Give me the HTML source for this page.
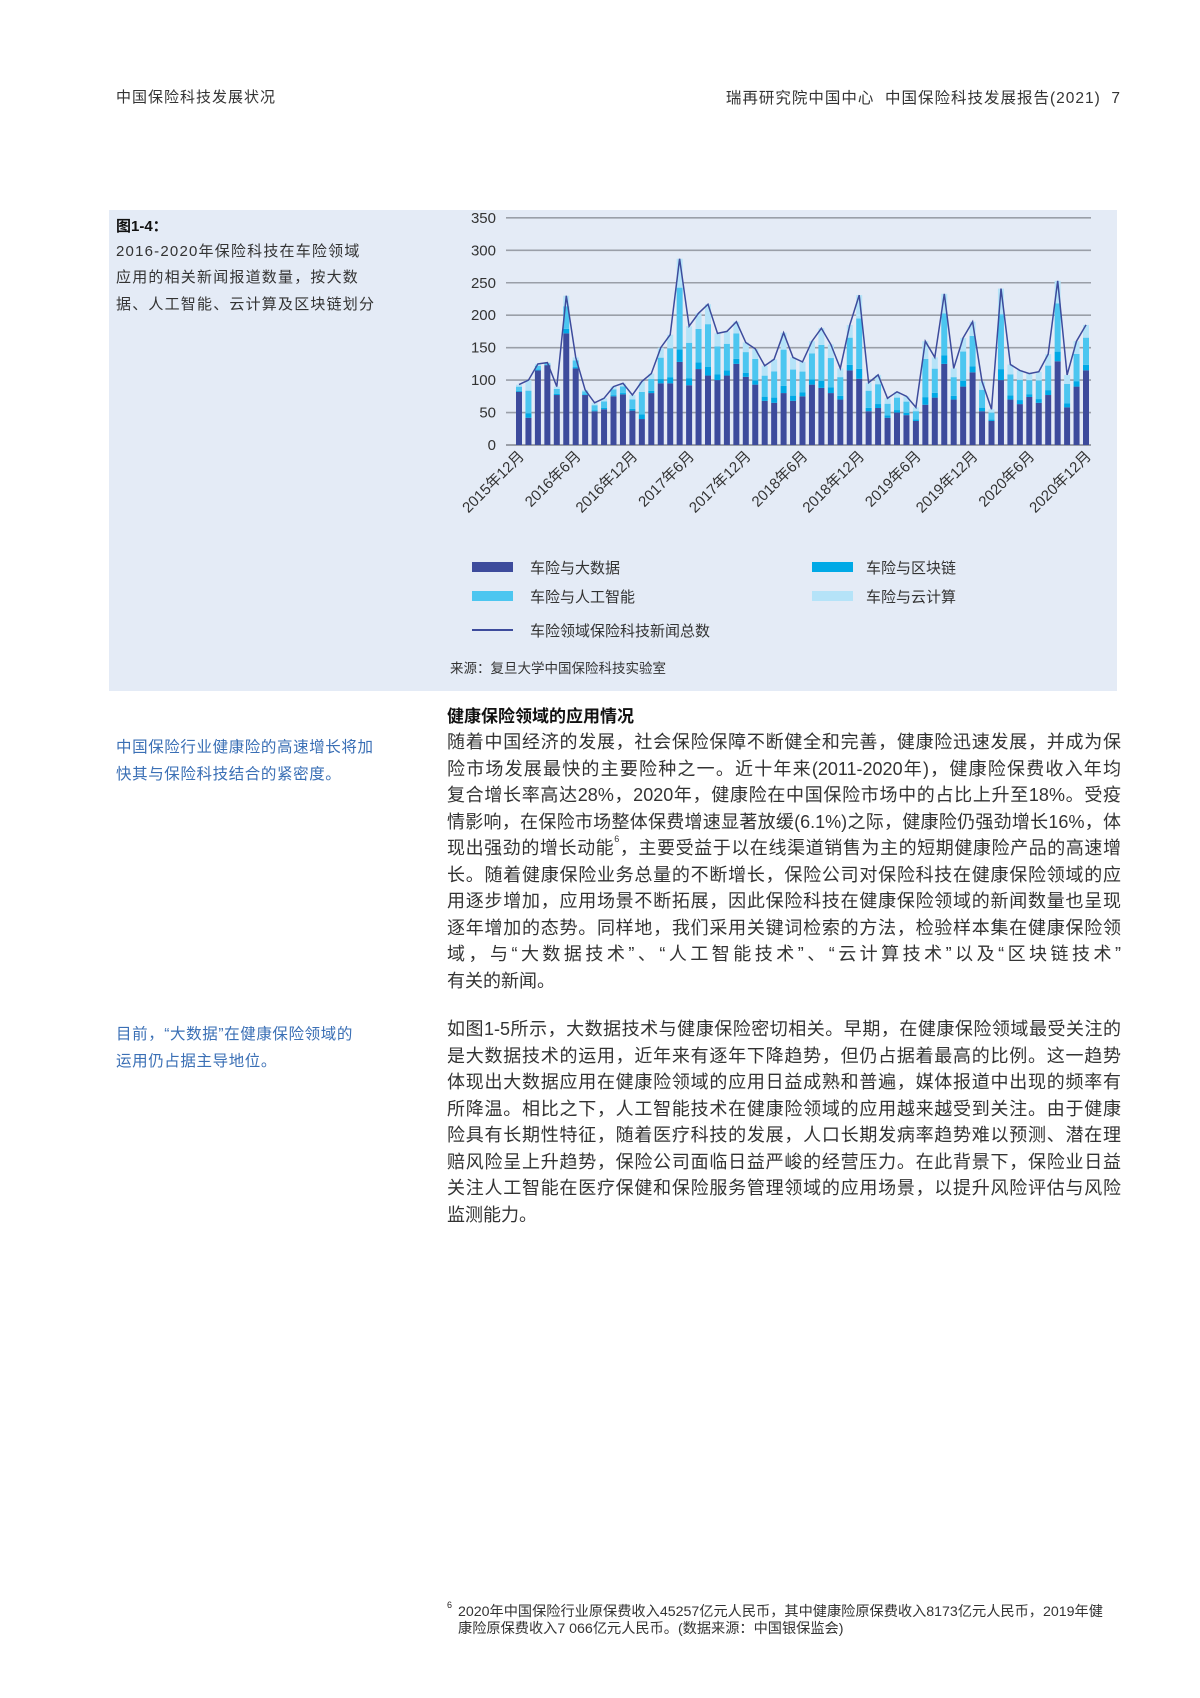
<!DOCTYPE html>
<html><head><meta charset="utf-8"><style>
body{margin:0;width:1200px;height:1698px;background:#fff;position:relative;font-family:"Liberation Sans","Noto Sans CJK SC",sans-serif;color:#231f20;overflow:hidden}
.a{position:absolute;white-space:nowrap}
.hd{font-size:15px;top:86px;color:#333;letter-spacing:1px}
#panel{position:absolute;left:109px;top:210px;width:1008px;height:481px;background:#e4ebf6}
.cap{font-size:15px;left:116px;color:#333;letter-spacing:1.2px}
.body{position:absolute;left:447px;width:674px;font-size:18px;line-height:26.5px;color:#333}
.body div{text-align:justify;text-align-last:justify;height:26.5px}
.body div.l{text-align-last:left}
sup{line-height:0;font-size:9px;vertical-align:top;position:relative;top:4px}
.side{font-size:15.5px;left:116px;color:#3a6fb5;letter-spacing:0.6px}
.lg{font-size:15px;color:#333}
.sw{position:absolute;width:41px;height:10px}
</style></head><body>
<div class="a hd" style="left:116px">中国保险科技发展状况</div>
<div class="a hd" style="right:79px;font-size:15.5px">瑞再研究院中国中心 &nbsp;中国保险科技发展报告(2021) &nbsp;7</div>
<div id="panel"></div>
<div class="a cap" style="top:215px;font-weight:bold;color:#111;letter-spacing:0">图1-4：</div>
<div class="a cap" style="top:240px">2016-2020年保险科技在车险领域</div>
<div class="a cap" style="top:266px">应用的相关新闻报道数量，按大数</div>
<div class="a cap" style="top:293px">据、人工智能、云计算及区块链划分</div>
<svg id="ch" class="a" style="left:0;top:0" width="1200" height="560" xmlns="http://www.w3.org/2000/svg"></svg>
<div class="sw" style="left:472px;top:562px;background:#3d4b9c"></div><div class="a lg" style="left:530px;top:557px">车险与大数据</div>
<div class="sw" style="left:812px;top:562px;background:#00a9e6"></div><div class="a lg" style="left:866px;top:557px">车险与区块链</div>
<div class="sw" style="left:472px;top:591px;background:#4cc6f0"></div><div class="a lg" style="left:530px;top:586px">车险与人工智能</div>
<div class="sw" style="left:812px;top:591px;background:#b5e3f8"></div><div class="a lg" style="left:866px;top:586px">车险与云计算</div>
<div class="sw" style="left:472px;top:629px;height:2px;background:#3d4b9c"></div><div class="a lg" style="left:530px;top:620px">车险领域保险科技新闻总数</div>
<div class="a" style="left:450px;top:657px;font-size:13.5px;color:#333">来源：复旦大学中国保险科技实验室</div>

<div class="a" style="left:447px;top:702px;font-size:17px;font-weight:bold;color:#111">健康保险领域的应用情况</div>
<div class="a side" style="top:735px">中国保险行业健康险的高速增长将加</div>
<div class="a side" style="top:762px">快其与保险科技结合的紧密度。</div>
<div class="body" style="top:729px">
<div>随着中国经济的发展，社会保险保障不断健全和完善，健康险迅速发展，并成为保</div>
<div>险市场发展最快的主要险种之一。近十年来(2011-2020年)，健康险保费收入年均</div>
<div>复合增长率高达28%，2020年，健康险在中国保险市场中的占比上升至18%。受疫</div>
<div>情影响，在保险市场整体保费增速显著放缓(6.1%)之际，健康险仍强劲增长16%，体</div>
<div>现出强劲的增长动能<sup>6</sup>，主要受益于以在线渠道销售为主的短期健康险产品的高速增</div>
<div>长。随着健康保险业务总量的不断增长，保险公司对保险科技在健康保险领域的应</div>
<div>用逐步增加，应用场景不断拓展，因此保险科技在健康保险领域的新闻数量也呈现</div>
<div>逐年增加的态势。同样地，我们采用关键词检索的方法，检验样本集在健康保险领</div>
<div>域，与“大数据技术”、“人工智能技术”、“云计算技术”以及“区块链技术”</div>
<div class="l">有关的新闻。</div>
</div>
<div class="a side" style="top:1022px">目前，“大数据”在健康保险领域的</div>
<div class="a side" style="top:1049px">运用仍占据主导地位。</div>
<div class="body" style="top:1016px">
<div>如图1-5所示，大数据技术与健康保险密切相关。早期，在健康保险领域最受关注的</div>
<div>是大数据技术的运用，近年来有逐年下降趋势，但仍占据着最高的比例。这一趋势</div>
<div>体现出大数据应用在健康险领域的应用日益成熟和普遍，媒体报道中出现的频率有</div>
<div>所降温。相比之下，人工智能技术在健康险领域的应用越来越受到关注。由于健康</div>
<div>险具有长期性特征，随着医疗科技的发展，人口长期发病率趋势难以预测、潜在理</div>
<div>赔风险呈上升趋势，保险公司面临日益严峻的经营压力。在此背景下，保险业日益</div>
<div>关注人工智能在医疗保健和保险服务管理领域的应用场景，以提升风险评估与风险</div>
<div class="l">监测能力。</div>
</div>
<div class="a" style="left:447px;top:1600px;font-size:9px">6</div>
<div class="a" style="left:458px;top:1601px;font-size:14.2px;color:#333">2020年中国保险行业原保费收入45257亿元人民币，其中健康险原保费收入8173亿元人民币，2019年健</div>
<div class="a" style="left:458px;top:1618px;font-size:14.2px;color:#333">康险原保费收入7 066亿元人民币。(数据来源：中国银保监会)</div>
<script>
var T=[93,100,125,127,90,230,135,85,65,72,90,95,77,98,110,150,170,287,183,203,217,172,175,190,158,148,122,132,173,135,128,160,180,155,118,185,231,96,108,72,82,75,58,160,135,233,118,165,190,98,55,241,124,115,110,113,140,253,108,160,185];
var D=[82,42,115,123,77,172,118,77,52,55,75,78,53,40,80,95,95,128,92,117,107,100,107,125,105,93,68,65,80,68,75,93,88,80,70,115,102,52,57,42,50,46,37,62,73,125,70,90,112,52,37,100,70,63,74,65,77,129,58,90,115];
var s='',y0=445,k=0.649,x0=519,dx=(1086-519)/60;
for(var v=0;v<=350;v+=50){var y=y0-v*k;s+='<line x1="506" x2="1091" y1="'+y+'" y2="'+y+'" stroke="#9a9fa8" stroke-width="'+(v?1.6:2)+'"/><text x="496" y="'+(y+5)+'" text-anchor="end" font-size="15" fill="#333" font-family="Liberation Sans">'+v+'</text>';}
var pts=[];
for(var i=0;i<61;i++){var x=x0+i*dx,t=T[i],d=D[i],r=t-d,b=r*0.12,c=r*0.6,p=r-b-c;var yy=y0;
[[d,'#3d4b9c'],[b,'#00a9e6'],[c,'#4cc6f0'],[p,'#b5e3f8']].forEach(function(q){var h=q[0]*k;yy-=h;s+='<rect x="'+(x-3)+'" y="'+yy+'" width="6" height="'+h+'" fill="'+q[1]+'"/>';});
pts.push(x.toFixed(1)+','+(y0-t*k).toFixed(1));}
s+='<polyline points="'+pts.join(' ')+'" fill="none" stroke="#3d4b9c" stroke-width="1.5"/>';
var L=['2015年12月','2016年6月','2016年12月','2017年6月','2017年12月','2018年6月','2018年12月','2019年6月','2019年12月','2020年6月','2020年12月'];
for(var j=0;j<11;j++){var x=x0+j*6*dx+6;s+='<text transform="translate('+x+',457) rotate(-45)" text-anchor="end" font-size="15" fill="#333" font-family="Liberation Sans, Noto Sans CJK SC">'+L[j]+'</text>';}
document.getElementById('ch').innerHTML=s;
</script>
</body></html>
